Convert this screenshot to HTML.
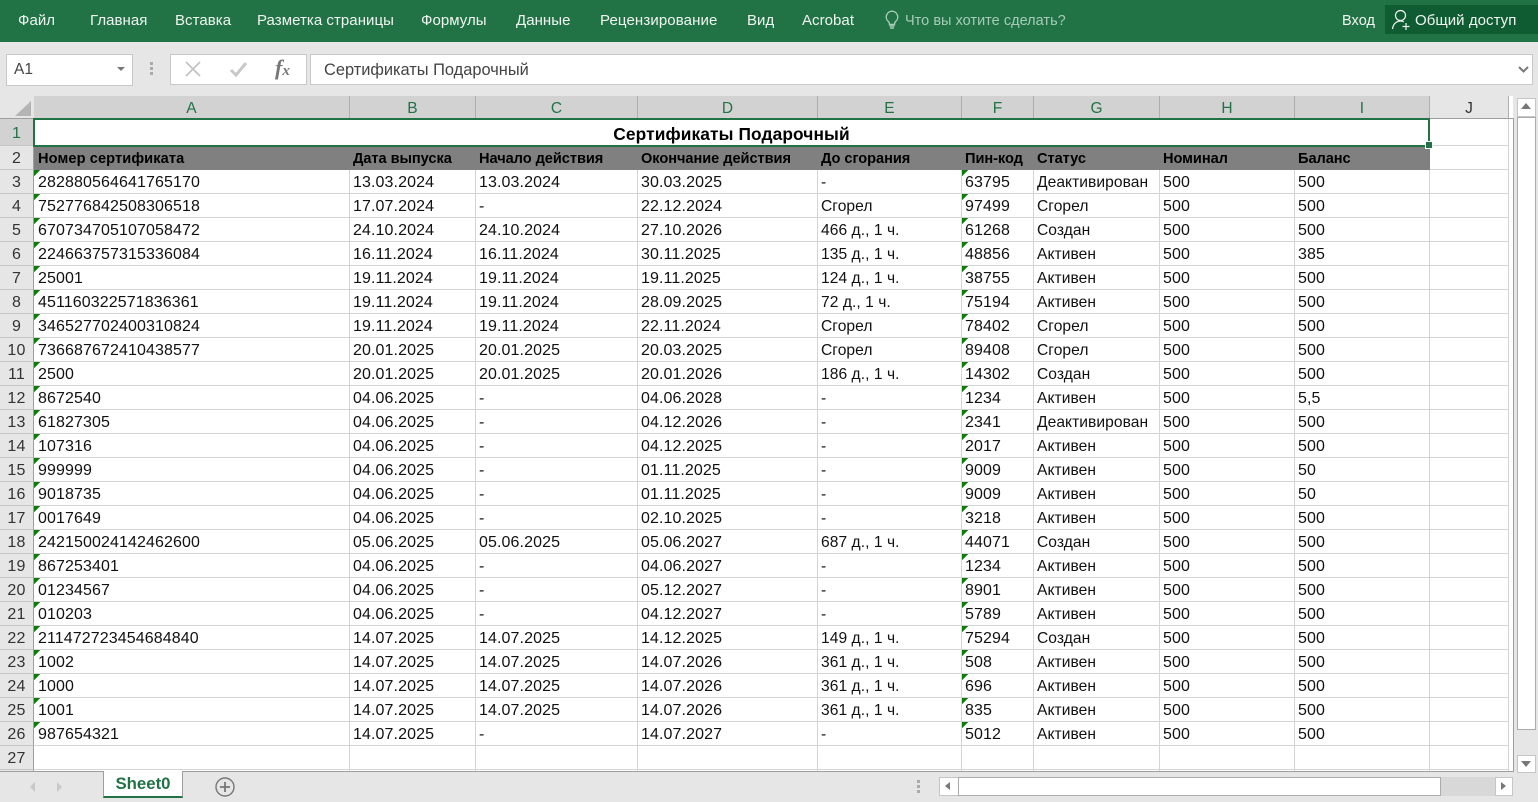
<!DOCTYPE html>
<html><head><meta charset="utf-8"><title>Excel</title>
<style>
html,body{margin:0;padding:0;width:1538px;height:802px;overflow:hidden;background:#e6e6e6;font-family:"Liberation Sans",sans-serif;}
.a{position:absolute;white-space:nowrap;}
#rb{left:0;top:0;width:1538px;height:42px;background:#217346;}
#rb span{position:absolute;top:12px;color:#f0f5f2;font-size:15px;letter-spacing:.05px;line-height:18px;white-space:nowrap;}
#grid{position:absolute;left:0;top:96px;width:1514px;height:676px;overflow:hidden;background:#fff;}
table{border-collapse:separate;border-spacing:0;table-layout:fixed;width:1509px;font-size:16px;color:#111;letter-spacing:.1px;}
td{box-sizing:border-box;height:24px;padding:3px 0 0 3px;border-right:1px solid #d4d4d4;border-bottom:1px solid #d4d4d4;white-space:nowrap;overflow:hidden;line-height:20px;vertical-align:top;}
td:nth-child(2){padding-left:4px;}
td:nth-child(6),td:nth-child(8){font-size:15.6px;letter-spacing:.05px;}
td:first-child{background:#e6e6e6;color:#333;text-align:center;padding:3px 0 0;border-right:1px solid #9e9e9e;border-bottom:1px solid #c6c6c6;font-size:16px;letter-spacing:.2px;}
tr.h td{height:23px;background:#d2d2d2;color:#217346;text-align:center;padding:3px 0 0;border-right:1px solid #aeaeae;border-bottom:1px solid #9e9e9e;font-size:15.5px;line-height:19px;}
tr.h td:first-child,tr.h td:last-child{background:#e6e6e6;color:#333;}
tr.h td:first-child{border-right:0;}
tr.t td{height:27px;padding:5px 0 0;font-weight:bold;font-size:17.35px;text-align:center;color:#000;}
tr.t td:first-child{background:#d2d2d2;color:#217346;font-weight:normal;font-size:16px;}
tr.t td:nth-child(2){padding:5px 0 0;}
tr.b td{background:#808080;color:#000;font-weight:bold;font-size:14.6px;letter-spacing:-.05px;border-right-color:#808080;border-bottom-color:#808080;}
tr.b td:nth-child(2){letter-spacing:.1px;}
tr.b td:first-child{background:#e6e6e6;color:#333;font-weight:normal;font-size:16px;letter-spacing:.2px;border-right-color:#9e9e9e;border-bottom-color:#c6c6c6;}
tr.b td:last-child{background:#fff;border-right-color:#d4d4d4;border-bottom-color:#d4d4d4;}
tr.d td:nth-child(2),tr.d td:nth-child(7){background:linear-gradient(135deg,#0e7a0d 50%,transparent 51%) no-repeat 0 0/6px 6px;}
</style></head><body>
<div class="a" id="rb">
<span style="left:18px">Файл</span><span style="left:90px">Главная</span><span style="left:175px">Вставка</span><span style="left:257px">Разметка страницы</span><span style="left:421px">Формулы</span><span style="left:516px">Данные</span><span style="left:600px;letter-spacing:.12px">Рецензирование</span><span style="left:747px">Вид</span><span style="left:802px">Acrobat</span>
<svg class="a" style="left:884px;top:10px" width="16" height="20" viewBox="0 0 16 20" fill="none" stroke="#a6cbb6" stroke-width="1.4"><path d="M8 1.2a5.8 5.8 0 0 0-3.6 10.300c.9.8 1.1 1.7 1.1 3h5c0-1.300.2-2.200 1.100-3A5.800 5.800 0 0 0 8 1.200z"/><path d="M5.500 16h5M6 18h4" stroke-width="1.600"/></svg>
<span style="left:905px;color:#a6cbb6;font-size:14.5px;letter-spacing:.02px">Что вы хотите сделать?</span>
<span style="left:1342px;font-size:14.500px">Вход</span>
<div class="a" style="left:1385px;top:5px;width:153px;height:29px;background:#0f5c33"></div>
<svg class="a" style="left:1391px;top:9px" width="20" height="22" viewBox="0 0 20 22" fill="none" stroke="#f0f5f2" stroke-width="1.2"><circle cx="9.500" cy="6.500" r="5"/><path d="M1.500 20c.5-4.500 3.500-8 8-8 1.200 0 2.300.3 3.300.8"/><path d="M15 14v7M11.500 17.500h7"/></svg>
<span style="left:1415px">Общий доступ</span>
</div>

<div class="a" style="left:6px;top:54px;width:125px;height:30px;background:#fff;border:1px solid #c8c8c8;color:#444;font-size:15.5px;line-height:30px;text-indent:7px">A1</div>
<div class="a" style="left:117px;top:67px;width:0;height:0;border:4px solid transparent;border-top:4px solid #777;border-bottom:0"></div>
<div class="a" style="left:150px;top:62px;width:3px;height:3px;background:#aaa;box-shadow:0 5px #aaa,0 10px #aaa"></div>
<div class="a" style="left:170px;top:54px;width:135px;height:29px;background:#fff;border:1px solid #c8c8c8"></div>
<svg class="a" style="left:184px;top:60px" width="18" height="18" viewBox="0 0 18 18" fill="none" stroke="#c4c4c4" stroke-width="1.800"><path d="M2 2l14 14M16 2L2 16"/></svg>
<svg class="a" style="left:229px;top:60px" width="19" height="18" viewBox="0 0 19 18" fill="none" stroke="#c8c8c8" stroke-width="3"><path d="M2 10l5 5L17 3"/></svg>
<div class="a" style="left:275px;top:55px;font:italic bold 22px/26px 'Liberation Serif',serif;color:#777">f<span style="font-size:15px">x</span></div>
<div class="a" style="left:310px;top:54px;width:1221px;height:29px;background:#fff;border:1px solid #c8c8c8;color:#444;font-size:16.4px;line-height:30px;text-indent:13px">Сертификаты Подарочный</div>
<svg class="a" style="left:1517px;top:65px" width="13" height="9" viewBox="0 0 13 9" fill="none" stroke="#777" stroke-width="2"><path d="M2 2l4.500 4.500L11 2"/></svg>

<div id="grid">
<table><colgroup><col style="width:34px"><col style="width:316px"><col style="width:126px"><col style="width:162px"><col style="width:180px"><col style="width:144px"><col style="width:72px"><col style="width:126px"><col style="width:135px"><col style="width:135px"><col style="width:79px"></colgroup>
<tr class="h"><td></td><td>A</td><td>B</td><td>C</td><td>D</td><td>E</td><td>F</td><td>G</td><td>H</td><td>I</td><td>J</td></tr>
<tr class="t"><td>1</td><td colspan="9">Сертификаты Подарочный</td><td></td></tr>
<tr class="b"><td>2</td><td>Номер сертификата</td><td>Дата выпуска</td><td>Начало действия</td><td>Окончание действия</td><td>До сгорания</td><td>Пин-код</td><td>Статус</td><td>Номинал</td><td>Баланс</td><td></td></tr>
<tr class="d"><td>3</td><td>282880564641765170</td><td>13.03.2024</td><td>13.03.2024</td><td>30.03.2025</td><td>-</td><td>63795</td><td>Деактивирован</td><td>500</td><td>500</td><td></td></tr>
<tr class="d"><td>4</td><td>752776842508306518</td><td>17.07.2024</td><td>-</td><td>22.12.2024</td><td>Сгорел</td><td>97499</td><td>Сгорел</td><td>500</td><td>500</td><td></td></tr>
<tr class="d"><td>5</td><td>670734705107058472</td><td>24.10.2024</td><td>24.10.2024</td><td>27.10.2026</td><td>466 д., 1 ч.</td><td>61268</td><td>Создан</td><td>500</td><td>500</td><td></td></tr>
<tr class="d"><td>6</td><td>224663757315336084</td><td>16.11.2024</td><td>16.11.2024</td><td>30.11.2025</td><td>135 д., 1 ч.</td><td>48856</td><td>Активен</td><td>500</td><td>385</td><td></td></tr>
<tr class="d"><td>7</td><td>25001</td><td>19.11.2024</td><td>19.11.2024</td><td>19.11.2025</td><td>124 д., 1 ч.</td><td>38755</td><td>Активен</td><td>500</td><td>500</td><td></td></tr>
<tr class="d"><td>8</td><td>451160322571836361</td><td>19.11.2024</td><td>19.11.2024</td><td>28.09.2025</td><td>72 д., 1 ч.</td><td>75194</td><td>Активен</td><td>500</td><td>500</td><td></td></tr>
<tr class="d"><td>9</td><td>346527702400310824</td><td>19.11.2024</td><td>19.11.2024</td><td>22.11.2024</td><td>Сгорел</td><td>78402</td><td>Сгорел</td><td>500</td><td>500</td><td></td></tr>
<tr class="d"><td>10</td><td>736687672410438577</td><td>20.01.2025</td><td>20.01.2025</td><td>20.03.2025</td><td>Сгорел</td><td>89408</td><td>Сгорел</td><td>500</td><td>500</td><td></td></tr>
<tr class="d"><td>11</td><td>2500</td><td>20.01.2025</td><td>20.01.2025</td><td>20.01.2026</td><td>186 д., 1 ч.</td><td>14302</td><td>Создан</td><td>500</td><td>500</td><td></td></tr>
<tr class="d"><td>12</td><td>8672540</td><td>04.06.2025</td><td>-</td><td>04.06.2028</td><td>-</td><td>1234</td><td>Активен</td><td>500</td><td>5,5</td><td></td></tr>
<tr class="d"><td>13</td><td>61827305</td><td>04.06.2025</td><td>-</td><td>04.12.2026</td><td>-</td><td>2341</td><td>Деактивирован</td><td>500</td><td>500</td><td></td></tr>
<tr class="d"><td>14</td><td>107316</td><td>04.06.2025</td><td>-</td><td>04.12.2025</td><td>-</td><td>2017</td><td>Активен</td><td>500</td><td>500</td><td></td></tr>
<tr class="d"><td>15</td><td>999999</td><td>04.06.2025</td><td>-</td><td>01.11.2025</td><td>-</td><td>9009</td><td>Активен</td><td>500</td><td>50</td><td></td></tr>
<tr class="d"><td>16</td><td>9018735</td><td>04.06.2025</td><td>-</td><td>01.11.2025</td><td>-</td><td>9009</td><td>Активен</td><td>500</td><td>50</td><td></td></tr>
<tr class="d"><td>17</td><td>0017649</td><td>04.06.2025</td><td>-</td><td>02.10.2025</td><td>-</td><td>3218</td><td>Активен</td><td>500</td><td>500</td><td></td></tr>
<tr class="d"><td>18</td><td>242150024142462600</td><td>05.06.2025</td><td>05.06.2025</td><td>05.06.2027</td><td>687 д., 1 ч.</td><td>44071</td><td>Создан</td><td>500</td><td>500</td><td></td></tr>
<tr class="d"><td>19</td><td>867253401</td><td>04.06.2025</td><td>-</td><td>04.06.2027</td><td>-</td><td>1234</td><td>Активен</td><td>500</td><td>500</td><td></td></tr>
<tr class="d"><td>20</td><td>01234567</td><td>04.06.2025</td><td>-</td><td>05.12.2027</td><td>-</td><td>8901</td><td>Активен</td><td>500</td><td>500</td><td></td></tr>
<tr class="d"><td>21</td><td>010203</td><td>04.06.2025</td><td>-</td><td>04.12.2027</td><td>-</td><td>5789</td><td>Активен</td><td>500</td><td>500</td><td></td></tr>
<tr class="d"><td>22</td><td>211472723454684840</td><td>14.07.2025</td><td>14.07.2025</td><td>14.12.2025</td><td>149 д., 1 ч.</td><td>75294</td><td>Создан</td><td>500</td><td>500</td><td></td></tr>
<tr class="d"><td>23</td><td>1002</td><td>14.07.2025</td><td>14.07.2025</td><td>14.07.2026</td><td>361 д., 1 ч.</td><td>508</td><td>Активен</td><td>500</td><td>500</td><td></td></tr>
<tr class="d"><td>24</td><td>1000</td><td>14.07.2025</td><td>14.07.2025</td><td>14.07.2026</td><td>361 д., 1 ч.</td><td>696</td><td>Активен</td><td>500</td><td>500</td><td></td></tr>
<tr class="d"><td>25</td><td>1001</td><td>14.07.2025</td><td>14.07.2025</td><td>14.07.2026</td><td>361 д., 1 ч.</td><td>835</td><td>Активен</td><td>500</td><td>500</td><td></td></tr>
<tr class="d"><td>26</td><td>987654321</td><td>14.07.2025</td><td>-</td><td>14.07.2027</td><td>-</td><td>5012</td><td>Активен</td><td>500</td><td>500</td><td></td></tr>
<tr><td>27</td><td></td><td></td><td></td><td></td><td></td><td></td><td></td><td></td><td></td><td></td></tr>
<tr><td></td><td></td><td></td><td></td><td></td><td></td><td></td><td></td><td></td><td></td><td></td></tr>
</table>
</div>
<div class="a" style="left:15px;top:101px;width:0;height:0;border-left:16px solid transparent;border-bottom:15px solid #b4b4b4"></div>
<div class="a" style="left:1513px;top:96px;width:25px;height:676px;background:#e6e6e6"></div>
<div class="a" style="left:1430px;top:118px;width:83px;height:1px;background:#9e9e9e"></div>
<div class="a" style="left:1513px;top:118px;width:1px;height:654px;background:#9e9e9e"></div>
<div class="a" style="left:33px;top:118px;width:1393px;height:25px;border:2px solid #217346;border-right:0"></div>
<div class="a" style="left:1428px;top:118px;width:2px;height:24px;background:#217346"></div>
<div class="a" style="left:1426px;top:142px;width:6px;height:6px;background:#217346;outline:1px solid #fff"></div>

<div class="a" style="left:1517px;top:98px;width:17px;height:17px;background:#fff;border:1px solid #c6c6c6"></div>
<div class="a" style="left:1521px;top:103px;width:0;height:0;border:5px solid transparent;border-bottom:6px solid #777;border-top:0"></div>
<div class="a" style="left:1517px;top:117px;width:17px;height:611px;background:#fff;border:1px solid #ababab"></div>
<div class="a" style="left:1517px;top:755px;width:17px;height:16px;background:#fff;border:1px solid #c6c6c6"></div>
<div class="a" style="left:1521px;top:761px;width:0;height:0;border:5px solid transparent;border-top:6px solid #777;border-bottom:0"></div>

<div class="a" style="left:0;top:771px;width:1514px;height:1px;background:#9e9e9e"></div>
<div class="a" style="left:30px;top:782px;width:0;height:0;border:5px solid transparent;border-right:5px solid #c8c8c8;border-left:0"></div>
<div class="a" style="left:57px;top:782px;width:0;height:0;border:5px solid transparent;border-left:5px solid #c8c8c8;border-right:0"></div>
<div class="a" style="left:103px;top:771px;width:78px;height:25px;background:#fff;border-left:1px solid #9e9e9e;border-right:1px solid #9e9e9e;border-bottom:2px solid #217346;color:#217346;font-weight:bold;font-size:16.8px;line-height:26px;text-align:center">Sheet0</div>
<svg class="a" style="left:215px;top:777px" width="20" height="20" viewBox="0 0 20 20" fill="none" stroke="#777" stroke-width="1.400"><circle cx="10" cy="10" r="9"/><path d="M10 5v10M5 10h10" stroke-width="1.800"/></svg>
<div class="a" style="left:917px;top:780px;width:3px;height:3px;background:#aaa;box-shadow:0 5px #aaa,0 10px #aaa"></div>
<div class="a" style="left:939px;top:777px;width:574px;height:19px;background:#d8d8d8"></div>
<div class="a" style="left:939px;top:777px;width:18px;height:17px;background:#fff;border:1px solid #c6c6c6"></div>
<div class="a" style="left:945px;top:782px;width:0;height:0;border:4px solid transparent;border-right:5px solid #777;border-left:0"></div>
<div class="a" style="left:958px;top:777px;width:481px;height:17px;background:#fff;border:1px solid #ababab"></div>
<div class="a" style="left:1495px;top:777px;width:16px;height:17px;background:#fff;border:1px solid #c6c6c6"></div>
<div class="a" style="left:1501px;top:782px;width:0;height:0;border:4px solid transparent;border-left:5px solid #777;border-right:0"></div>
</body></html>
